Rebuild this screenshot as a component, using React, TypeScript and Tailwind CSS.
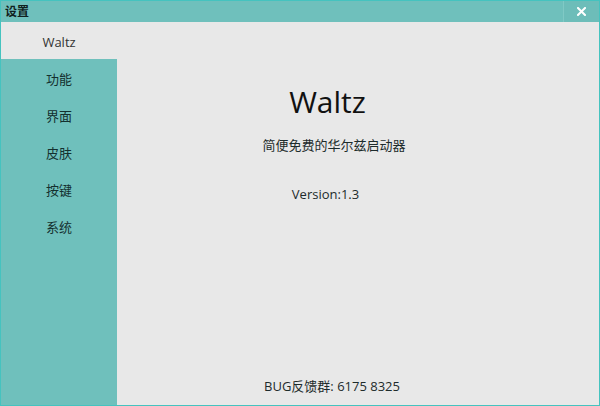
import React from "react";

const cjk = '"Open Sans", "Noto Sans CJK SC", sans-serif';

const menuItems = ["Waltz", "功能", "界面", "皮肤", "按键", "系统"];

const CloseIcon = () => (
    <svg width="9" height="9" viewBox="0 0 9 9">
        <path d="M1 1L8 8M8 1L1 8" stroke="#ffffff" strokeWidth="2" strokeLinecap="square" />
    </svg>
);

export default function App() {
    const active = "Waltz";

    return (
        <div
            className="w-[600px] h-[406px] flex flex-col border border-[#45c3bf] bg-[#e8e8e8] text-[#1d2b2b] overflow-hidden"
            style={{ fontFamily: cjk }}
        >
            {/* title bar */}
            <div className="h-[21px] flex items-stretch bg-[#6fc0bc]">
                <div className="flex-1 flex items-center pl-[4px] text-[12px] font-bold text-[#102020]">设置</div>
                <div className="w-[36px] flex items-center justify-center border-l border-[#80c9c5] bg-[#6dbdb9]">
                    <CloseIcon />
                </div>
            </div>

            <div className="flex-1 flex">
                {/* sidebar */}
                <div className="w-[116px] flex flex-col bg-[#6fc0bc]">
                    {menuItems.map((item) => (
                        <div
                            key={item}
                            className={
                                item === active
                                    ? "h-[37px] flex items-center justify-center pt-[4px] text-[13px] bg-[#e8e8e8] text-[#333333]"
                                    : "h-[37px] flex items-center justify-center pt-[4px] text-[13px] text-[#14302f]"
                            }
                        >
                            {item}
                        </div>
                    ))}
                </div>

                {/* content */}
                <div className="flex-1 flex flex-col pt-[62px] bg-[#e8e8e8]">
                    <div className="flex justify-center pr-[61px] h-[36px] leading-[36px] text-[30px] text-[#111111]">Waltz</div>
                    <div className="flex justify-center pr-[48px] mt-[16px] h-[18px] leading-[18px] text-[13px]">
                        简便免费的华尔兹启动器
                    </div>
                    <div className="flex justify-center pr-[65px] mt-[31px] h-[18px] leading-[18px] text-[13px]">
                        Version:1.3
                    </div>
                    <div className="flex-1" />
                    <div className="flex justify-center pr-[52px] mb-[10px] h-[18px] leading-[18px] text-[13px]">
                        BUG反馈群: 6175 8325
                    </div>
                </div>
            </div>
        </div>
    );
}
